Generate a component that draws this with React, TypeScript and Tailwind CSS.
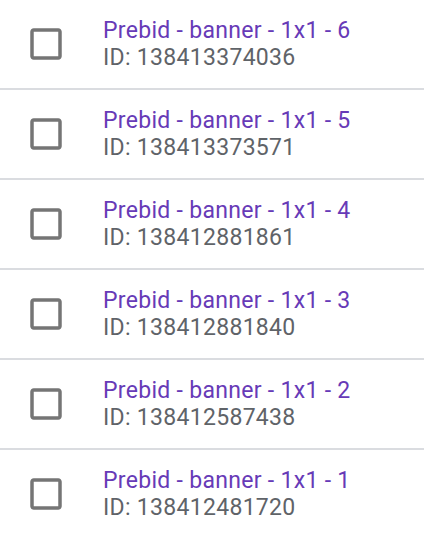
const items = [
  { name: 'Prebid - banner - 1x1 - 6', id: '138413374036' },
  { name: 'Prebid - banner - 1x1 - 5', id: '138413373571' },
  { name: 'Prebid - banner - 1x1 - 4', id: '138412881861' },
  { name: 'Prebid - banner - 1x1 - 3', id: '138412881840' },
  { name: 'Prebid - banner - 1x1 - 2', id: '138412587438' },
  { name: 'Prebid - banner - 1x1 - 1', id: '138412481720' },
];

const CheckboxIcon = () => (
  <svg viewBox="0 0 24 24" className="w-[42px] h-[42px] shrink-0" fill="#757575">
    <path d="M19 5v14H5V5h14m0-2H5c-1.11 0-2 .9-2 2v14c0 1.1.89 2 2 2h14c1.1 0 2-.9 2-2V5c0-1.1-.9-2-2-2z" />
  </svg>
);

const App = () => {
  return (
    <div className="w-[424px] bg-white font-['Roboto',sans-serif]">
      {items.map((item) => (
        <div
          key={item.id}
          className="flex items-center h-[90px] border-b-2 border-[#dadce0] pl-[25px]"
        >
          <CheckboxIcon />
          <div className="ml-[36px] flex flex-col text-[23px] leading-[27px] tracking-[0.3px]">
            <span className="text-[#673ab7]">{item.name}</span>
            <span className="text-[#5f6368]">ID: {item.id}</span>
          </div>
        </div>
      ))}
    </div>
  );
};

export default App;
